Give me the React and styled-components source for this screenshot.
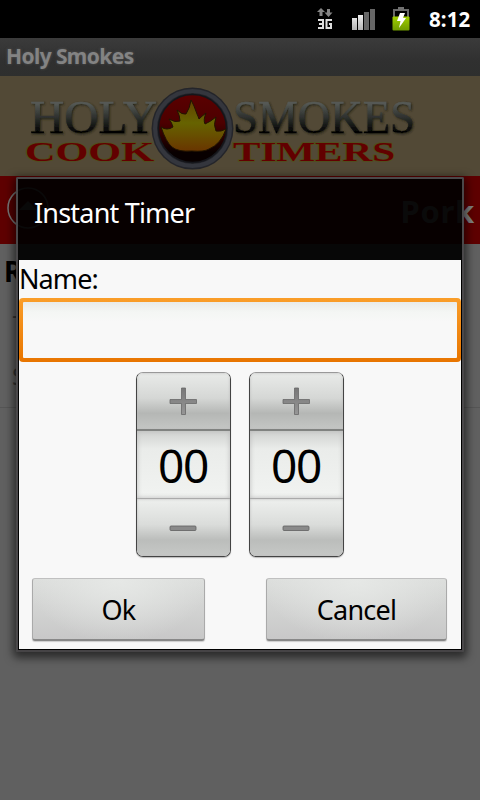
import React from 'react';
import styled, { createGlobalStyle, css } from 'styled-components';

const Global = createGlobalStyle`
  *{box-sizing:border-box}
  body{margin:0;background:#606060;overflow:hidden;font-family:"Noto Sans","Open Sans",sans-serif}
`;
const Screen = styled.div`position:relative;width:480px;height:800px;display:flex;flex-direction:column;background:#606060;overflow:hidden;`;
const StatusBar = styled.header`height:38px;flex:none;background:#000;display:flex;align-items:center;justify-content:flex-end;padding-right:8px;`;
const StatusIcons = styled.svg`width:100px;height:38px;flex:none;`;
const Clock = styled.span`width:43px;margin-left:19px;color:#fff;font-size:20.5px;font-weight:700;line-height:38px;letter-spacing:.1px;white-space:nowrap;`;
const TitleBar = styled.div`height:38px;flex:none;background:linear-gradient(#3b3b3b,#303030 60%,#2e2f2e);color:#838383;font-weight:700;font-size:21px;line-height:36px;padding-left:6px;letter-spacing:-.6px;text-shadow:0 0 3px #555;white-space:nowrap;`;
const Banner = styled.div`height:100px;flex:none;background:#524936;`;
const Logo = styled.svg`display:block;width:480px;height:100px;`;
const Category = styled.div`height:68px;flex:none;background:#5e0000;display:flex;justify-content:space-between;align-items:center;padding:0 6px 0 6px;`;
const BackIcon = styled.svg`width:44px;height:44px;margin-top:-5px;`;
const CategoryName = styled.span`font-size:31px;font-weight:700;color:#808080;letter-spacing:.7px;line-height:68px;margin-right:-1px;padding-top:1px;`;
const List = styled.div`height:164px;flex:none;padding:9px 0 0 4px;border-bottom:1px solid #555;color:#000;`;
const ItemTitle = styled.div`font-size:28px;font-weight:700;line-height:36px;height:30px;`;
const ItemText = styled.div`font-size:24px;line-height:62px;height:62px;color:#333;padding-left:8px;white-space:nowrap;overflow:hidden;`;

const Dialog = styled.section`position:absolute;left:16px;top:177px;width:448px;height:475px;border:2px solid #4a484a;border-bottom-color:#464446;border-radius:2px;box-shadow:0 3px 9px 3px rgba(0,0,0,.55);display:flex;flex-direction:column;overflow:visible;`;
const DialogHeader = styled.h1`height:81px;flex:none;margin:0;background:rgba(0,0,0,.92);color:#fff;font-size:27px;font-weight:400;line-height:68px;padding-left:16px;letter-spacing:-.8px;`;
const Body = styled.form`height:390px;margin:0;flex:none;background:#f8f8f8;border:1px solid #000;border-top:0;display:flex;flex-direction:column;`;
const Label = styled.label`height:38px;flex:none;font-size:27px;line-height:38px;color:#000;letter-spacing:-.9px;`;
const NameFrame = styled.div`height:64px;flex:none;padding:4px;border-radius:4px;background:linear-gradient(#fa9e2a,#e87500);`;
const NameInput = styled.input`display:block;width:100%;height:56px;border:0;outline:0;border-radius:1px;background:linear-gradient(#e9ebe9,#f4f6f4 10px,#f8f8f8 20px);padding:0 8px;font:27px "Noto Sans",sans-serif;`;
const Pickers = styled.div`display:flex;justify-content:center;gap:18px;padding-top:10px;height:195px;flex:none;margin-right:1px;`;
const Picker = styled.div`width:95px;height:185px;display:flex;flex-direction:column;border:1px solid #444;border-top-color:#999;border-radius:7px;overflow:hidden;box-shadow:0 1px 1px #bbb;`;
const Step = styled.button`flex:none;border:0;padding:0;display:flex;align-items:center;justify-content:center;
  ${p => p.$up ? css`height:56px;background:linear-gradient(#e9ebe9,#d5d7d5 45%,#b5b7b5 72%,#c4c6c4);` : css`height:57px;background:linear-gradient(#eef0ee,#dadcda 45%,#bbbdbb 72%,#c6c8c6);`}
  box-shadow:inset 0 0 3px #bbb;`;
const Digits = styled.output`height:70px;flex:none;border-top:2px solid #808280;border-bottom:1px solid #aaa;background:linear-gradient(#cfd1cf,#eaecea 18px,#f1f3f1);box-shadow:inset 0 0 5px #bbb;font-size:46px;line-height:68px;text-align:center;color:#000;letter-spacing:-1.3px;`;
const Sign = styled.svg`width:28px;height:28px;`;
const Actions = styled.div`height:92px;display:flex;justify-content:space-between;align-items:flex-start;padding:21px 14px 0 13px;`;
const Action = styled.button`width:${p => p.$width}px;height:63px;padding:1px 0 0;background:radial-gradient(ellipse at 50% 0%,#e6e8e6,transparent 75%),linear-gradient(#dcdedc,#c8c8c8);border:1px solid #aaa;border-top-color:#c0c0c0;border-bottom:2px solid #888;border-radius:3px;box-shadow:0 1px 1px #ccc;font:27px "Noto Sans",sans-serif;letter-spacing:-.75px;color:#000;`;

function Stepper({ unit }) {
  const gradient = `sign-${unit}`;
  const fill = <defs><linearGradient id={gradient} x2="0" y2="1"><stop stopColor="#777" /><stop offset="1" stopColor="#969696" /></linearGradient></defs>;
  return <Picker>
    <Step type="button" $up aria-label={`Increase ${unit}`}><Sign viewBox="0 0 28 28">{fill}<path d="M12.500 1h4v11.500h11v4H16.500v11h-4v-11H1v-4h11.500z" fill={`url(#${gradient})`} stroke="#686868" strokeWidth=".8" strokeLinejoin="round" /></Sign></Step>
    <Digits>00</Digits>
    <Step type="button" aria-label={`Decrease ${unit}`}><Sign viewBox="0 0 28 28"><rect x="1" y="12" width="26" height="4.5" rx="1" fill="#8a8a8a" stroke="#606060" strokeWidth=".8" /></Sign></Step>
  </Picker>;
}

export default function App() {
  return <><Global /><Screen>
    <StatusBar>
      <StatusIcons viewBox="310 0 100 38">
        <defs><linearGradient id="bars" x2="0" y2="1"><stop stopColor="#eee" /><stop offset="1" stopColor="#b5b5b5" /></linearGradient><linearGradient id="charge" x2="0" y2="1"><stop stopColor="#a0cf00" /><stop offset="1" stopColor="#709a00" /></linearGradient></defs>
        <path d="M321 8l4 4h-2.500v4h-3v-4H317zM327 9h3v3.500h2.500l-4 4.500-4-4.500h2.500z" fill="#858585" />
        <path d="M318 20h5v8h-5M319 24h4M332 20h-5.500v8h4.500v-4h-2" fill="none" stroke="#ddd" strokeWidth="2" />
        <path d="M352 18h5v12h-5zM358 15h5v15h-5z" fill="url(#bars)" />
        <path d="M364 12h5v18h-5zM370 9h5v21h-5z" fill="#666" />
        <path d="M394 17v-7h14v7" fill="none" stroke="#686868" strokeWidth="2" /><path d="M398 7h6v3h-6z" fill="#707070" />
        <rect x="392.500" y="16.500" width="17" height="14" rx="1" fill="url(#charge)" />
        <path d="M400 13h5l-2 5h3l-7 10 1.500-7H397z" fill="#fff" />
      </StatusIcons>
      <Clock>8:12</Clock>
    </StatusBar>
    <TitleBar>Holy Smokes</TitleBar>
    <Banner><Logo viewBox="0 76 480 100" aria-label="Holy Smokes Cook Timers">
      <defs>
        <linearGradient id="steel" x2="0" y2="1"><stop offset=".25" stopColor="#555955" /><stop offset=".5" stopColor="#303330" /><stop offset=".78" stopColor="#050505" /></linearGradient>
        <linearGradient id="disc" x2="0" y2="1"><stop stopColor="#5b0000" /><stop offset=".42" stopColor="#4c0000" /><stop offset=".85" stopColor="#080000" /></linearGradient>
        <linearGradient id="fire" x2="0" y2="1"><stop stopColor="#624000" /><stop offset=".45" stopColor="#666300" /><stop offset="1" stopColor="#693500" /></linearGradient>
        <filter id="relief" x="-10%" y="-20%" width="120%" height="140%"><feDropShadow dx="1" dy="1" stdDeviation="1" floodColor="#242018" /></filter>
      </defs>
      <g fontFamily="Liberation Serif, serif" fill="url(#steel)" stroke="url(#steel)" strokeWidth=".4" fontSize="47" filter="url(#relief)">
        <text x="30" y="132.500" textLength="127" lengthAdjust="spacingAndGlyphs">HOLY</text>
        <text x="233" y="132.500" textLength="182" lengthAdjust="spacingAndGlyphs">SMOKES</text>
      </g>
      <g fontFamily="Liberation Serif, serif" fontWeight="700" fill="#620000" stroke="#505019" strokeWidth="1.500" paintOrder="stroke" fontSize="28">
        <text x="25" y="161" textLength="129" lengthAdjust="spacingAndGlyphs">COOK</text>
        <text x="233" y="161" textLength="162" lengthAdjust="spacingAndGlyphs">TIMERS</text>
      </g>
      <circle cx="192.500" cy="128.500" r="41" fill="#24252a" /><circle cx="192.500" cy="128.500" r="37.500" fill="none" stroke="#34363d" strokeWidth="4" /><circle cx="192.500" cy="128.500" r="34" fill="url(#disc)" stroke="#14151a" strokeWidth="1.500" />
      <path d="M161 127Q167 131 173 127Q172 123 169 119Q175 123 180 121Q180 116 177 110Q182 115 186 114Q190 108 191 100Q194 105 197 114Q198 116 199 119Q202 116 206 113Q203 120 205 124Q210 122 216 117Q213 125 216 131Q221 132 226 129Q221 144 209 149Q204 152 192 151Q178 152 172 147Q166 142 161 127z" fill="url(#fire)" stroke="#211500" strokeWidth="1" />
    </Logo></Banner>
    <Category>
      <BackIcon viewBox="0 0 44 44"><circle cx="22" cy="22" r="20" fill="#500000" stroke="#777" strokeWidth="1.5" /><path d="M13 24l9-9 9 9z" fill="#777" /></BackIcon>
      <CategoryName>Pork</CategoryName>
    </Category>
    <List><ItemTitle>Ribs (Full Rack)</ItemTitle><ItemText>- 3 hours</ItemText><ItemText>Smoke at 225</ItemText></List>
    <Dialog role="dialog">
      <DialogHeader>Instant Timer</DialogHeader>
      <Body>
        <Label htmlFor="name">Name:</Label>
        <NameFrame><NameInput id="name" /></NameFrame>
        <Pickers><Stepper unit="hours" /><Stepper unit="minutes" /></Pickers>
        <Actions><Action type="button" $width={173}>Ok</Action><Action type="button" $width={181}>Cancel</Action></Actions>
      </Body>
    </Dialog>
  </Screen></>;
}
